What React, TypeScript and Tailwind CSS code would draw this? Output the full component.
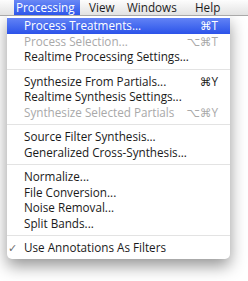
import React from "react";

type Item =
    | { sep: true }
    | { label: string; shortcut?: string; disabled?: boolean; active?: boolean; checked?: boolean; sep?: false };

const items: Item[] = [
    { label: "Process Treatments...", shortcut: "⌘T", active: true },
    { label: "Process Selection...", shortcut: "⌥⌘T", disabled: true },
    { label: "Realtime Processing Settings..." },
    { sep: true },
    { label: "Synthesize From Partials...", shortcut: "⌘Y" },
    { label: "Realtime Synthesis Settings..." },
    { label: "Synthesize Selected Partials", shortcut: "⌥⌘Y", disabled: true },
    { sep: true },
    { label: "Source Filter Synthesis..." },
    { label: "Generalized Cross-Synthesis..." },
    { sep: true },
    { label: "Normalize..." },
    { label: "File Conversion..." },
    { label: "Noise Removal..." },
    { label: "Split Bands..." },
    { sep: true },
    { label: "Use Annotations As Filters", checked: true },
];

const font = { fontFamily: '"Open Sans", "DejaVu Sans", sans-serif' };

const App: React.FC = () => {
    return (
        <div className="w-[248px] h-[281px] bg-white overflow-hidden text-[11.7px] leading-none font-medium" style={font}>
            {/* menu bar */}
            <div className="relative z-10 h-[16px] flex items-stretch bg-gradient-to-b from-[#fdfdfd] to-[#e2e2e2] border-b border-[#a9a9a9] text-[#1c1c1c]">
                <div className="ml-[14px] w-[66px] pl-[2px] flex items-center bg-gradient-to-b from-[#6a88f6] to-[#2d55ea] text-white">
                    Processing
                </div>
                <div className="w-[38px] pl-[9px] flex items-center">View</div>
                <div className="w-[68px] pl-[9px] flex items-center">Windows</div>
                <div className="pl-[9px] flex items-center">Help</div>
            </div>

            {/* dropdown */}
            <div className="ml-[7px] w-[223px] bg-white pt-[2px] pb-[3px] rounded-b-[5px] shadow-[0_7px_16px_rgba(0,0,0,0.42)]">
                {items.map((item, i) =>
                    item.sep ? (
                        <div key={i} className="h-[9px] flex items-center">
                            <div className="w-full h-px bg-[#e3e3e3]" />
                        </div>
                    ) : (
                        <div
                            key={i}
                            className={
                                item.active
                                    ? "h-[15.5px] pt-px flex items-center justify-between pl-[17px] pr-[12px] bg-gradient-to-b from-[#6282f5] to-[#2c52e9] text-white"
                                    : item.disabled
                                    ? "h-[15.5px] pt-px flex items-center justify-between pl-[17px] pr-[12px] text-[#a9a9a9]"
                                    : "h-[15.5px] pt-px flex items-center justify-between pl-[17px] pr-[12px] text-[#1a1a1a]"
                            }
                        >
                            <span className="relative">
                                {item.checked && (
                                    <span className="absolute left-[-16px] top-0 text-[#6e6e6e] text-[11px]">✓</span>
                                )}
                                {item.label}
                            </span>
                            {item.shortcut && <span>{item.shortcut}</span>}
                        </div>
                    )
                )}
            </div>
        </div>
    );
};

export default App;
